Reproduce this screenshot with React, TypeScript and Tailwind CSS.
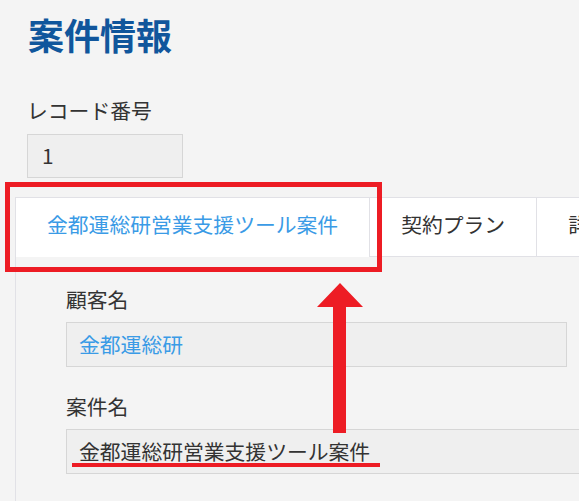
import React from 'react';

const tabs = ['金都運総研営業支援ツール案件', '契約プラン', '詳細情報'];

export default function App() {
  return (
    <div
      className="relative w-[579px] h-[501px] overflow-hidden bg-[#f4f4f4] text-[#333333]"
      style={{ fontFamily: '"Noto Sans CJK JP", "Noto Sans", sans-serif' }}
    >
      <h1 className="ml-[28px] mt-[14px] text-[36px] leading-[40px] font-bold text-[#10569c]">案件情報</h1>

      <div className="ml-[27px] mt-[42px] text-[20.8px] leading-[28px]">レコード番号</div>
      <div className="ml-[27px] mt-[10px] w-[156px] h-[44px] border border-[#d6d6d6] bg-[#efefef] flex items-center pl-[14px] text-[20.8px]">
        1
      </div>

      {/* tabs */}
      <div className="ml-[15px] mt-[19px] flex h-[60px] whitespace-nowrap">
        {tabs.map((t, i) => (
          <div
            key={t}
            className={
              i === 0
                ? 'flex items-center pb-[5px] px-[31px] bg-white border-t border-l border-r border-[#e1e1e6] text-[#3a9be6] text-[20.8px] shrink-0'
                : 'flex items-center pb-[5px] px-[31px] bg-white border-t border-r border-b border-[#e1e1e6] text-[20.8px] shrink-0'
            }
          >
            {t}
          </div>
        ))}
      </div>

      {/* panel */}
      <div className="ml-[15px] border-l border-[#e1e1e6] pl-[50px] pt-[28px] pb-[40px]">
        <div className="text-[20.8px] leading-[28px]">顧客名</div>
        <div className="mt-[9px] w-[501px] h-[45px] border border-[#d6d6d6] bg-[#efefef] flex items-center pl-[12px] text-[20.8px] text-[#3a9be6]">
          金都運総研
        </div>
        <div className="mt-[25px] text-[20.8px] leading-[28px]">案件名</div>
        <div className="mt-[9px] w-[700px] h-[45px] border border-[#d6d6d6] bg-[#efefef] flex items-center pl-[12px] text-[20.8px] whitespace-nowrap">
          金都運総研営業支援ツール案件
        </div>
      </div>

      {/* annotations */}
      <div className="absolute left-[5px] top-[182px] w-[377px] h-[90px] border-[5px] border-[#ed1c24]" />
      <svg className="absolute left-[317px] top-[283px]" width="46" height="150" viewBox="0 0 46 150">
        <polygon points="23,0 46,24 29,24 29,150 16,150 16,24 0,24" fill="#ed1c24" />
      </svg>
      <div className="absolute left-[72px] top-[463px] w-[308px] h-[4px] bg-[#ed1c24]" />
    </div>
  );
}
